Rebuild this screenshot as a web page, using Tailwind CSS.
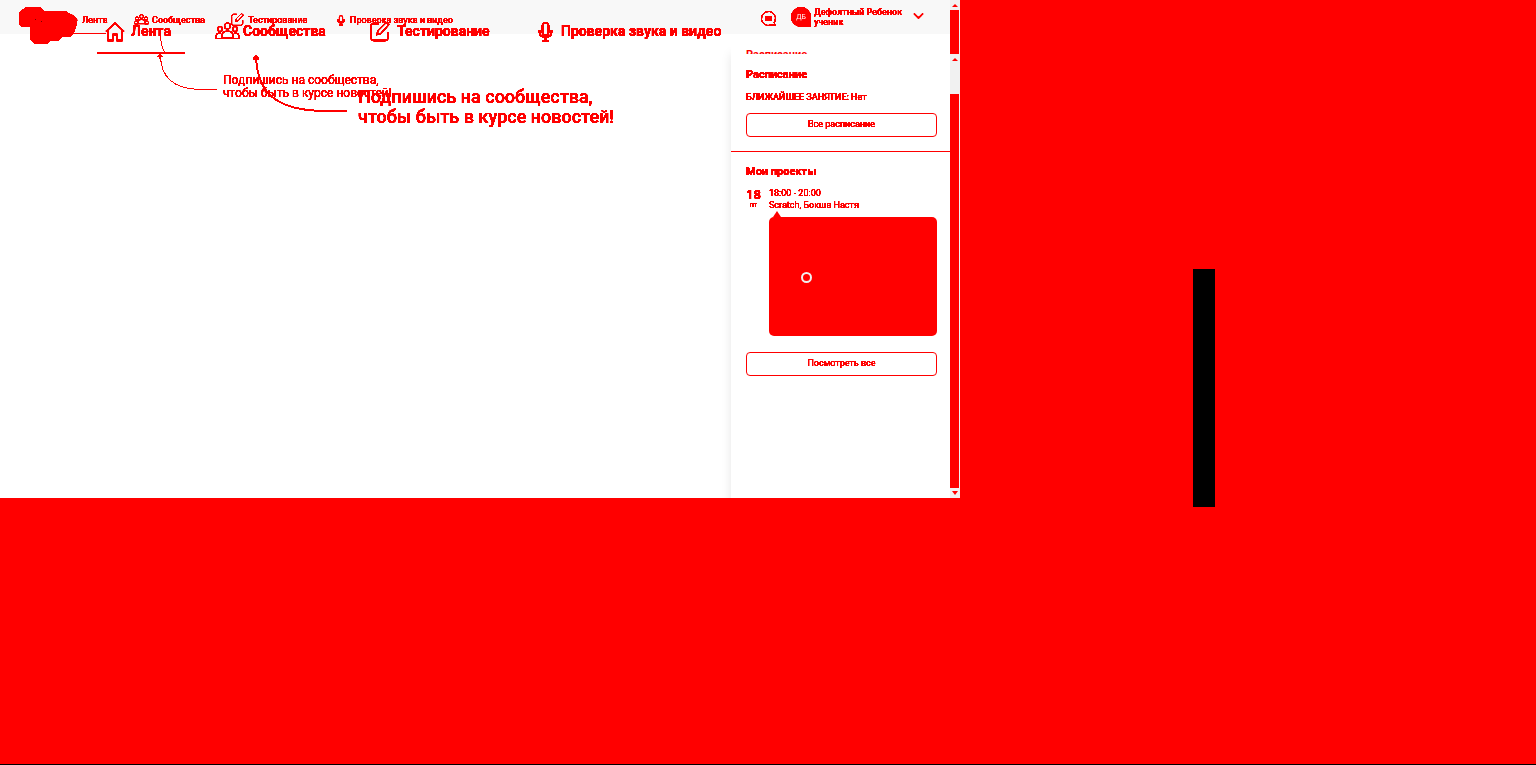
<!DOCTYPE html>
<html lang="ru">
<head>
<meta charset="utf-8">
<meta name="viewport" content="width=device-width, initial-scale=1">
<title>Лента</title>
<script src="https://cdn.jsdelivr.net/npm/@tailwindcss/browser@4"></script>
</head>
<body class="min-h-screen bg-[#ff0000] font-[Roboto,'Liberation_Sans',sans-serif] text-[#ff0000] flex flex-col border-b border-black">
<svg class="absolute w-0 h-0" aria-hidden="true">
  <defs>
    <filter id="mask" x="-5%" y="-5%" width="110%" height="110%"><feComponentTransfer><feFuncA type="linear" slope="6" intercept="-0.3"/></feComponentTransfer></filter>
    <symbol id="home" viewBox="0 0 20 20"><path d="M1 10 10 1.500 19 10M3 9v10h5v-6h4v6h5V9" fill="none" stroke="currentColor" stroke-width="1.300"/></symbol>
    <symbol id="group" viewBox="0 0 25 18"><g fill="none" stroke="currentColor" stroke-width="1.200"><circle cx="12.500" cy="4" r="3"/><circle cx="5" cy="7" r="2.500"/><circle cx="20" cy="7" r="2.500"/><path d="M7 16c-1-5 2-7 5.500-7s6.500 2 5.500 7zM7 16.500H1c-.5-4 1-5.500 5-5.500M18 16.500h6c.5-4-1-5.500-5-5.500"/></g></symbol>
    <symbol id="edit" viewBox="0 0 20 20"><path d="M9 2H4a3 3 0 0 0-3 3v11a3 3 0 0 0 3 3h11a3 3 0 0 0 3-3v-5M7 13l1-4 8-8 3 2-8 9z" fill="none" stroke="currentColor" stroke-width="1.300"/></symbol>
    <symbol id="mic" viewBox="0 0 15 21"><path d="M4.500 5a3 3 0 0 1 6 0v6a3 3 0 0 1-6 0zM1.500 9v2c0 3 2 5 6 5s6-2 6-5V9M7.500 16v4M4 20h7" fill="none" stroke="currentColor" stroke-width="1.600"/></symbol>
  </defs>
</svg>
<div class="flex flex-1">
  <section class="relative w-5/8 self-start bg-white flex">
    <div class="flex-1 min-w-0 flex flex-col">
      <header class="h-[34px] bg-[#f8f8f8] flex items-start justify-between">
        <nav class="flex pt-[13px] pl-[66px] text-[9px] leading-3 font-medium [filter:url(#mask)]">
          <a href="#" class="w-[68px] flex items-center gap-1"><svg class="size-3"><use href="#home"/></svg>Лента</a>
          <a href="#" class="w-[97px] flex items-center gap-[3px]"><svg class="w-[15px] h-[11px]"><use href="#group"/></svg>Сообщества</a>
          <a href="#" class="w-[106px] flex items-center gap-1"><svg class="size-[13px]"><use href="#edit"/></svg>Тестирование</a>
          <a href="#" class="flex items-center gap-[5px] whitespace-nowrap"><svg class="w-2 h-3"><use href="#mic"/></svg>Проверка звука и видео</a>
        </nav>
        <div class="flex pt-[7px] pr-[26px] text-[9px] leading-[10px] font-medium [filter:url(#mask)]">
          <button type="button" aria-label="Сообщения" class="mt-[2px] mr-[14px]"><svg class="size-[17px]" viewBox="0 0 17 17"><path d="M15 11a7 7 0 1 0-4 4h5l-2-2z" fill="none" stroke="currentColor"/><path d="M5 6h7v5H5z" fill="currentColor"/></svg></button>
          <button type="button" aria-label="Профиль" class="flex text-left">
            <span class="size-5 rounded-full rounded-br-none bg-[#ff0000] text-white text-[7px] leading-5 text-center font-normal mr-[3px]">ДБ</span>
            <span class="w-[99px]">Дефолтный Ребенок<br>ученик</span>
            <svg class="w-[11px] h-[6px] mt-[6px]" viewBox="0 0 11 6"><path d="m1 .5 4.500 4.500L10 .5" fill="none" stroke="currentColor" stroke-width="1.300"/></svg>
          </button>
        </div>
      </header>
      <div class="flex flex-1 min-h-[464px]">
        <main class="flex-1"></main>
        <aside class="w-[219px] pt-[14px] bg-white shadow-[0_20px_10px_rgba(0,0,0,0.1)] [clip-path:inset(0_0_0_-12px)]">
          <div class="h-[6px] mx-[15px] overflow-hidden text-[11px] leading-[14px] font-bold" aria-hidden="true">Расписание</div>
          <section class="pl-[15px] pr-[13px] pb-[14px] pt-[13px] border-b border-[#ff0000]">
            <h2 class="text-[11px] leading-4 font-bold [filter:url(#mask)]">Расписание</h2>
            <p class="mt-2 text-[9px] leading-3 font-medium [filter:url(#mask)]">БЛИЖАЙШЕЕ ЗАНЯТИЕ: Нет</p>
            <button type="button" class="mt-[10px] block w-full h-6 rounded-[4px] border border-[#ff0000] text-[9px]"><span class="[filter:url(#mask)]">Все расписание</span></button>
          </section>
          <section class="pl-[15px] pr-[13px] pt-3">
            <h2 class="text-[11px] leading-4 font-bold [filter:url(#mask)]">Мои проекты</h2>
            <div class="mt-[7px] flex">
              <div class="w-[23px] pt-[2px] text-[13px] leading-3 font-bold [filter:url(#mask)]">18<div class="w-[15px] text-center text-[7px] leading-[9px] font-normal">пт</div></div>
              <div class="text-[9px] leading-3 font-normal [filter:url(#mask)]">18:00 - 20:00<br>Scratch, Бокша Настя</div>
            </div>
            <div class="ml-[23px]">
              <svg class="w-2 h-[6px] ml-1" viewBox="0 0 8 6"><path d="m4 0 4 6H0z" fill="currentColor"/></svg>
              <div class="h-[119px] rounded-[5px] bg-[#ff0000] pt-[55px] pl-8"><div class="size-[11px] rounded-full border-2 border-[#f0f0f0]"></div></div>
            </div>
            <button type="button" class="mt-4 block w-full h-6 rounded-[4px] border border-[#ff0000] text-[9px]"><span class="[filter:url(#mask)]">Посмотреть все</span></button>
          </section>
        </aside>
      </div>
    </div>
    <div class="w-[10px] shrink-0 bg-[#f1f1f1] flex flex-col items-center" aria-hidden="true">
      <svg class="w-[10px] h-[10px] shrink-0" viewBox="0 0 10 10"><path d="m2 7 3-3 3 3z" fill="currentColor"/></svg>
      <div class="w-full pr-px h-11"><div class="h-full bg-[#ff0000]"></div></div>
      <svg class="w-[10px] h-[10px] shrink-0" viewBox="0 0 10 10"><path d="m2 7 3-3 3 3z" fill="currentColor"/></svg>
      <div class="w-full pr-px pt-[30px] flex-1 flex"><div class="flex-1 bg-[#ff0000]"></div></div>
      <svg class="w-[10px] h-[10px] shrink-0" viewBox="0 0 10 10"><path d="m2 3 3 4 3-4z" fill="currentColor"/></svg>
    </div>

    <!-- Larger copy of the navigation, laid over the first one -->
    <nav class="absolute left-[105px] top-5 flex h-[22px] text-[14px] leading-[22px] font-bold [filter:url(#mask)]">
      <a href="#" class="w-[110px] flex items-center gap-[6px]"><svg class="w-5 h-[21px]"><use href="#home"/></svg>Лента</a>
      <a href="#" class="w-[155px] flex items-center gap-[3px]"><svg class="w-[25px] h-[18px]"><use href="#group"/></svg>Сообщества</a>
      <a href="#" class="w-[168px] flex items-center gap-[7px]"><svg class="w-5 h-[21px]"><use href="#edit"/></svg>Тестирование</a>
      <a href="#" class="flex items-center gap-[8px] whitespace-nowrap"><svg class="w-[15px] h-[21px]"><use href="#mic"/></svg>Проверка звука и видео</a>
    </nav>
    <!-- Logo, underlines and the two hint arrows -->
    <svg class="absolute left-0 top-0 w-[360px] h-[120px] pointer-events-none" viewBox="0 0 360 120" fill="none" stroke="#ff0000" shape-rendering="crispEdges" aria-hidden="true">
      <path d="M26 7h14l4 4h22l3 2 6 3 2 4v5l-3 8-4 4h-8l-4 4h-7l-4 3H35l-5-4V27h-9l-2-3V12z" fill="#ff0000" stroke="none"/>
      <path d="M35 19h1v1h-1zM41 21h1v1h-1z" fill="#700" stroke="none"/>
      <path d="M72 33.500h34M160.500 34q0 12 4 18"/>
      <path d="M97 53h88" stroke-width="2"/>
      <path d="M160.500 55c0 21 12 34 40 34.500h16"/><path d="m160 53 3 4h-2v2h-2v-2h-2z" fill="#ff0000" stroke="none"/>
      <path d="M256 56c1 35 18 55 70 55h21" stroke-width="2"/><path d="m256 54 3 4v2h-6v-2z" fill="#ff0000" stroke="none"/>
    </svg>
    <p class="absolute left-[223px] top-[74px] text-[12px] leading-[13px] font-normal whitespace-nowrap [filter:url(#mask)]">Подпишись на сообщества,<br>чтобы быть в курсе новостей!</p>
    <p class="absolute left-[358px] top-[87px] text-[18px] leading-5 font-medium whitespace-nowrap [filter:url(#mask)]">Подпишись на сообщества,<br>чтобы быть в курсе новостей!</p>
  </section>
  <div class="flex-1 pt-[269px] flex justify-center items-start"><div class="w-[22px] h-[238px] mr-[88px] bg-black"></div></div>
</div>
</body>
</html>
